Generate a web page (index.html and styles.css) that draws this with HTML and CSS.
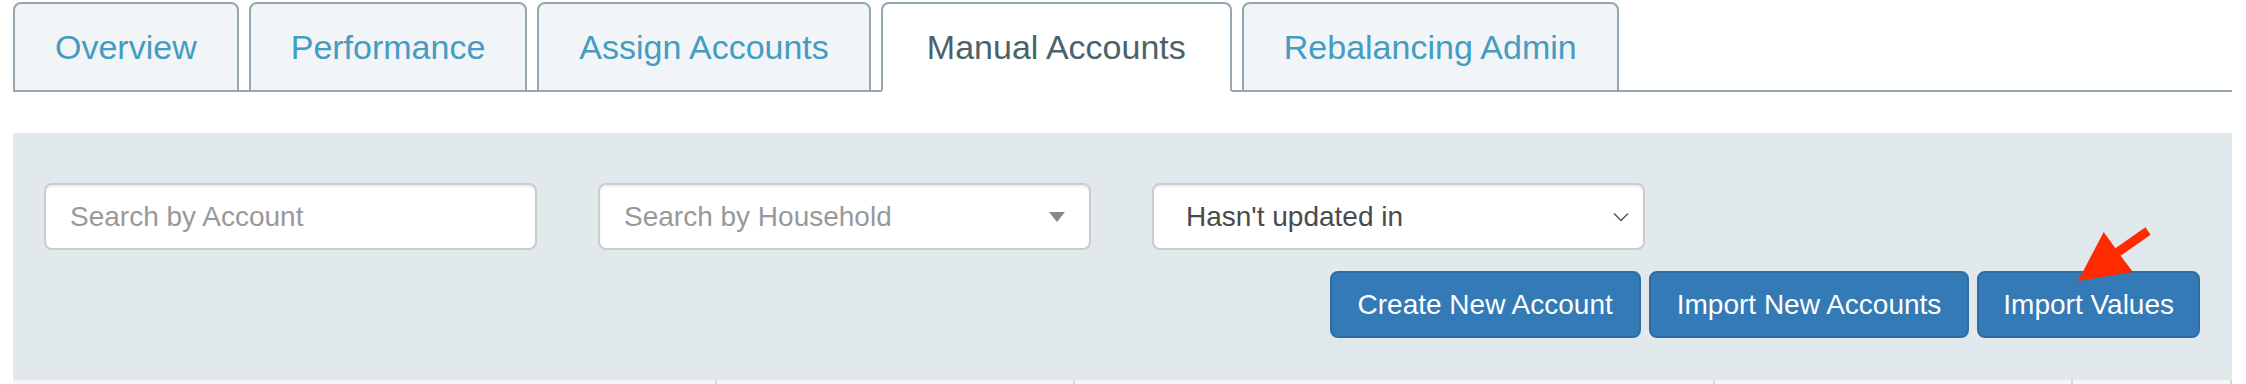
FILE: index.html
```html
<!DOCTYPE html>
<html lang="en">
<head>
    <meta charset="utf-8">
    <title>Manual Accounts</title>
    <link rel="stylesheet" href="styles.css">
</head>
<body>
    <div class="page">
        <ul class="nav-tabs">
            <li class="tab"><a href="#">Overview</a></li>
            <li class="tab"><a href="#">Performance</a></li>
            <li class="tab"><a href="#">Assign Accounts</a></li>
            <li class="tab active"><a href="#">Manual Accounts</a></li>
            <li class="tab"><a href="#">Rebalancing Admin</a></li>
        </ul>

        <div class="filter-panel">
            <div class="filter-row">
                <input class="form-control" type="text" placeholder="Search by Account">
                <div class="form-control select2">
                    <span class="select2-placeholder">Search by Household</span>
                    <span class="select2-arrow"></span>
                </div>
                <div class="form-control native-select">
                    <span>Hasn't updated in</span>
                    <svg class="chevron" width="16" height="10" viewBox="0 0 16 10">
                        <polyline points="1,1.5 8,8.5 15,1.5" fill="none" stroke="#555" stroke-width="1.5"/>
                    </svg>
                </div>
            </div>
            <div class="action-row">
                <button class="btn btn-primary">Create New Account</button>
                <button class="btn btn-primary">Import New Accounts</button>
                <button class="btn btn-primary has-annotation">Import Values
                    <!-- red callout arrow pointing at the button -->
                    <svg class="annotation-arrow" width="90" height="70" viewBox="0 0 90 70">
                        <polygon points="73.4,5.3 78.6,12.7 48.6,33.7 61,50 6,59 31.7,10 43.4,26.3" fill="#ff2a00"/>
                    </svg>
                </button>
            </div>
        </div>

        <div class="table-head">
            <div class="th"></div>
            <div class="th"></div>
            <div class="th"></div>
            <div class="th"></div>
            <div class="th last"></div>
        </div>
    </div>
</body>
</html>
```

FILE: styles.css
```css
body {
    margin: 0;
    font-family: "Liberation Sans", Arial, Helvetica, sans-serif;
    font-size: 28px;
    color: #333333;
    background-color: #ffffff;
}
.page {
    padding: 2px 14px 0 13px;
}

/* tabs */
.nav-tabs {
    display: flex;
    gap: 10px;
    margin: 0;
    padding: 0;
    list-style: none;
    border-bottom: 2px solid #94a7b0;
}
.tab {
    margin-bottom: -2px;
}
.tab a {
    display: block;
    padding: 20px 40px;
    font-size: 34px;
    line-height: 46px;
    color: #459cc2;
    text-decoration: none;
    background-color: #f2f5f7;
    border: 2px solid #94a7b0;
    border-radius: 8px 8px 0 0;
}
.tab.active a {
    padding: 20px 44px;
    color: #4b626b;
    background-color: #ffffff;
    border-bottom-color: #ffffff;
}

/* filter panel */
.filter-panel {
    margin-top: 41px;
    padding: 50px 32px 41px 31px;
    background-color: #e1e9ec;
}
.filter-row {
    display: flex;
    gap: 61px;
}
.form-control {
    box-sizing: border-box;
    width: 493px;
    height: 67px;
    padding: 12px 24px;
    font-family: inherit;
    font-size: 28px;
    color: #555555;
    background-color: #ffffff;
    border: 2px solid #cccccc;
    border-radius: 8px;
    box-shadow: inset 0 2px 2px rgba(0,0,0,0.075);
}
.form-control::placeholder {
    color: #999999;
}
.select2,
.native-select {
    display: flex;
    align-items: center;
    justify-content: space-between;
}
.select2-placeholder {
    color: #999999;
}
.select2-arrow {
    width: 0;
    height: 0;
    border-style: solid;
    border-width: 10px 8px 0 8px;
    border-color: #888888 transparent transparent transparent;
}
.native-select {
    padding: 12px 14px 12px 32px;
    color: #4a4a4a;
}
.chevron {
    display: block;
}

/* buttons */
.action-row {
    display: flex;
    justify-content: flex-end;
    gap: 8px;
    margin-top: 21px;
}
.btn {
    height: 67px;
    padding: 12px 26px;
    font-family: inherit;
    font-size: 28px;
    line-height: 40px;
    color: #ffffff;
    background-color: #337ab7;
    border: 2px solid #2e6da4;
    border-radius: 8px;
    white-space: nowrap;
}
.btn.has-annotation {
    position: relative;
    padding: 12px 24px;
}
.annotation-arrow {
    position: absolute;
    left: 93px;
    top: -51px;
}

/* start of the accounts table */
.table-head {
    display: grid;
    grid-template-columns: 702px 358px 640px 358px 1fr;
    height: 40px;
    background-color: #f5f5f5;
    border-top: 1px solid #ece4e8;
}
.th + .th {
    border-left: 2px solid #d6d6d6;
}
.th.last {
    border-right: 2px solid #d6d6d6;
}
```
